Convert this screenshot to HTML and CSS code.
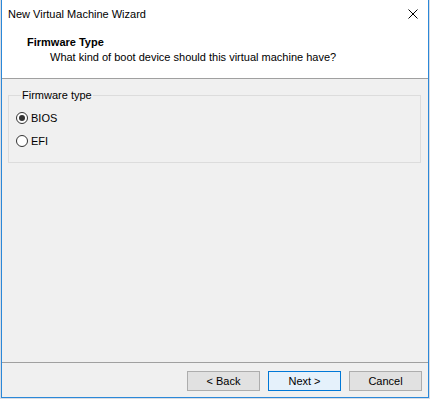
FILE: index.html
```html
<!DOCTYPE html>
<html lang="en">
<head>
    <meta charset="UTF-8">
    <title>New Virtual Machine Wizard</title>
    <link rel="stylesheet" href="styles.css">
</head>
<body>
    <div class="window">
        <div class="titlebar">
            <span class="title">New Virtual Machine Wizard</span>
            <svg class="close" width="10" height="10" viewBox="0 0 10 10">
                <path d="M0.5 0.5 L9.5 9.5 M9.5 0.5 L0.5 9.5" stroke="#000" stroke-width="1" fill="none"/>
            </svg>
        </div>

        <div class="header">
            <div class="page-title">Firmware Type</div>
            <div class="page-desc">What kind of boot device should this virtual machine have?</div>
        </div>

        <div class="content">
            <fieldset class="group">
                <legend>Firmware type</legend>
                <label class="radio">
                    <span class="dot checked"></span>
                    <span>BIOS</span>
                </label>
                <label class="radio">
                    <span class="dot"></span>
                    <span>EFI</span>
                </label>
            </fieldset>
        </div>

        <div class="footer">
            <button class="btn">&lt; Back</button>
            <button class="btn default">Next &gt;</button>
            <button class="btn">Cancel</button>
        </div>
    </div>
</body>
</html>
```

FILE: styles.css
```css
body {
    margin: 0;
    padding-left: 1px;
    background: #d9dce3;
    font-family: "Liberation Sans", Arial, sans-serif;
    font-size: 11px;
    color: #000;
}

.window {
    box-sizing: border-box;
    width: 428px;
    height: 398px;
    display: flex;
    flex-direction: column;
    background: #f0f0f0;
    border: 1px solid #2b88d8;
    border-top: none;
}

.titlebar {
    height: 30px;
    background: #fff;
    display: flex;
    align-items: center;
    justify-content: space-between;
    padding: 0 10px 2px 6px;
    box-sizing: border-box;
    font-size: 11px;
}

.close {
    display: block;
}

.header {
    height: 44px;
    background: #fff;
    border-bottom: 1px solid #a0a0a0;
    padding: 4px 0 0 25px;
}

.page-title {
    font-weight: bold;
    line-height: 16px;
}

.page-desc {
    padding-left: 23px;
    line-height: 15px;
}

.content {
    flex: 1;
    padding: 9px 7px 0 6px;
}

.group {
    box-sizing: border-box;
    margin: 0;
    height: 75px;
    border: 1px solid #dcdcdc;
    padding: 7px 8px 0 7px;
}

.group legend {
    padding: 0 1px;
    margin-left: 5px;
    line-height: 15px;
}

.radio {
    display: flex;
    align-items: center;
    gap: 3px;
    height: 16px;
    margin-bottom: 7px;
}

.dot {
    box-sizing: border-box;
    width: 12px;
    height: 12px;
    border: 1px solid #333;
    border-radius: 50%;
    background: #fff;
    position: relative;
}

.dot.checked::after {
    content: "";
    position: absolute;
    left: 2px;
    top: 2px;
    width: 6px;
    height: 6px;
    border-radius: 50%;
    background: #333;
}

.footer {
    height: 35px;
    border-top: 1px solid #a0a0a0;
    display: flex;
    justify-content: flex-end;
    gap: 8px;
    padding: 8px 6px 0 0;
    box-sizing: border-box;
}

.btn {
    width: 73px;
    height: 20px;
    padding: 0;
    font: inherit;
    color: #000;
    background: #e1e1e1;
    border: 1px solid #adadad;
}

.btn.default {
    background: #e5f1fb;
    border-color: #0078d7;
}
```
